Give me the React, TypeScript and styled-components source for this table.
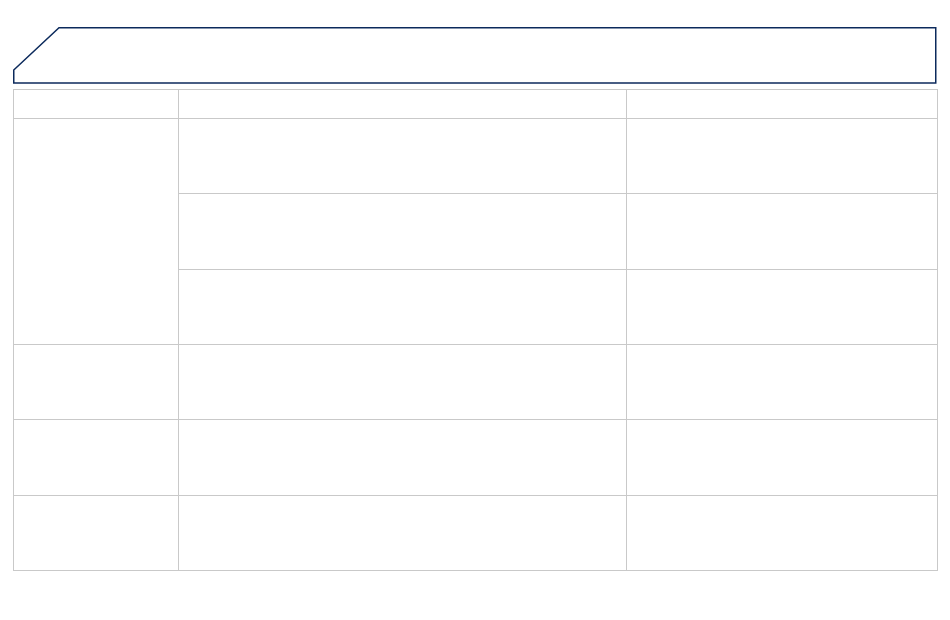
import React from "react";
import styled, { createGlobalStyle } from "styled-components";

const Global = createGlobalStyle`
  html, body {
    margin: 0;
    padding: 0;
    background: #ffffff;
    font-family: "Liberation Sans", Arial, sans-serif;
  }
`;

const Page = styled.div`
  padding: 27px 0 0 13px;
  display: flex;
  flex-direction: column;
  gap: 5px;
`;

const Banner = styled.div`
  width: 924px;
  height: 57px;
  display: flex;
`;

const BannerShape = styled.svg`
  width: 100%;
  height: 100%;
  display: block;
`;

const Table = styled.div`
  width: 925px;
  display: grid;
  grid-template-columns: 164px 447px 310px;
  grid-template-rows: 28px 74px 75px 74px 74px 75px 74px;
  gap: 1px;
  padding: 1px;
  box-sizing: border-box;
  background: #c9c9c9;
`;

const Cell = styled.div<{ $rowSpan?: number }>`
  background: #ffffff;
  grid-row: ${(p) => (p.$rowSpan ? `span ${p.$rowSpan}` : "auto")};
`;

export default function App() {
  const rows: { span?: number }[] = [
    { span: 3 },
    {},
    {},
    {},
    {},
    {},
  ];
  return (
    <>
      <Global />
      <Page>
        <Banner>
          <BannerShape viewBox="0 0 924 57" preserveAspectRatio="none">
            <polygon
              points="0.75,43 46,0.75 922.75,0.75 922.75,56 0.75,56"
              fill="#ffffff"
              stroke="#0c2a5c"
              strokeWidth="1.5"
            />
          </BannerShape>
        </Banner>
        <Table>
          <Cell />
          <Cell />
          <Cell />
          {rows.map((r, i) => (
            <React.Fragment key={i}>
              {r.span !== undefined || i >= 3 ? (
                <Cell $rowSpan={r.span} />
              ) : null}
              <Cell />
              <Cell />
            </React.Fragment>
          ))}
        </Table>
      </Page>
    </>
  );
}
